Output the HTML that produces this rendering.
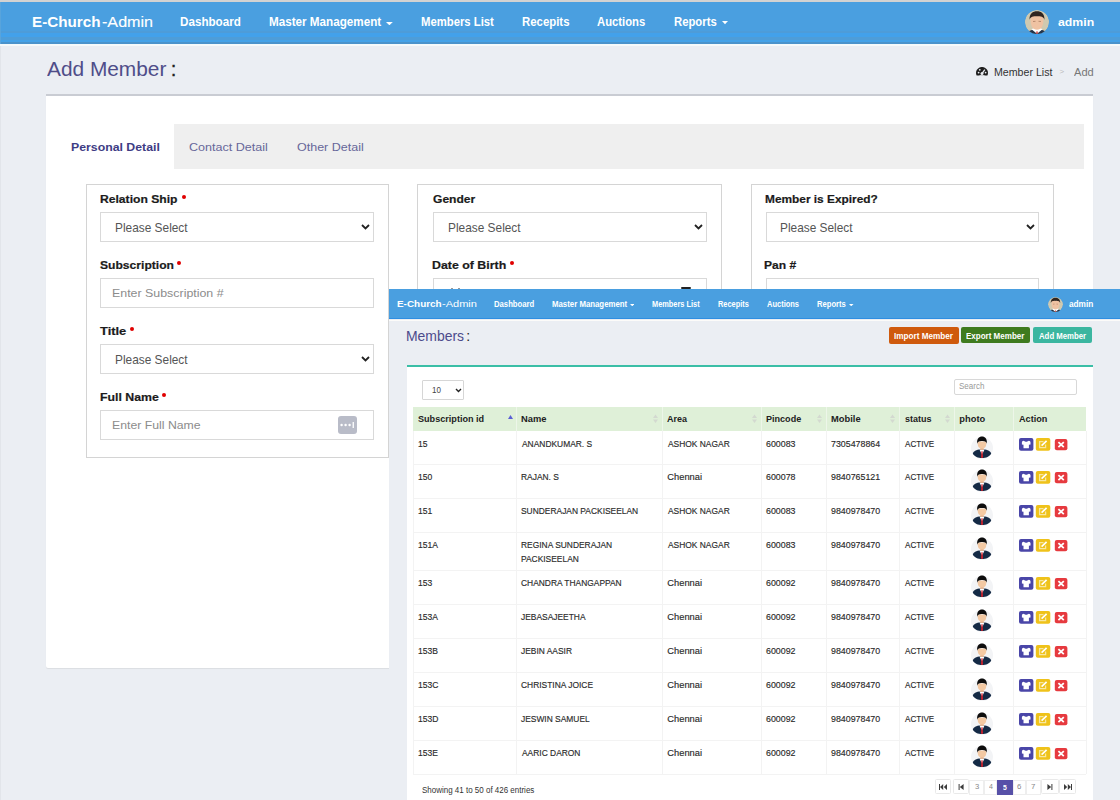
<!DOCTYPE html>
<html><head><meta charset="utf-8"><title>E-Church Admin</title>
<style>
html,body{margin:0;padding:0;}
body{width:1120px;height:800px;overflow:hidden;position:relative;background:#ebeef3;font-family:"Liberation Sans",sans-serif;}
body>div,body>span,body>svg{position:absolute;}
.t{white-space:nowrap;line-height:1;transform-origin:0 0;display:block;}
</style></head><body>
<div style="left:0px;top:0px;width:1120px;height:800px;background:#ebeef3"></div>
<div style="left:0px;top:0px;width:1120px;height:2px;background:#d2d2d2"></div>
<div style="left:0px;top:2px;width:1120px;height:42px;background:#4a9fe0"></div>
<div style="left:0px;top:31px;width:1120px;height:2px;background:#4e9cd8"></div>
<div style="left:0px;top:33px;width:1120px;height:4px;background:#43a1ea"></div>
<div style="left:0px;top:37px;width:1120px;height:3px;background:#4e9dd8"></div>
<div style="left:0px;top:40px;width:1120px;height:2px;background:#44a2e8"></div>
<div style="left:0px;top:42px;width:1120px;height:2px;background:#4a93cb"></div>
<div style="left:0px;top:44px;width:1120px;height:1.5px;background:#f5fafb"></div>
<div style="left:0px;top:2px;width:1px;height:42px;background:#58a4dc"></div>
<div style="left:0px;top:45.5px;width:1px;height:755px;background:#e2e5ea"></div>
<span class="t" style="left:32.33px;top:14.58px;font-size:14.97px;font-weight:bold;color:#fff;transform:scaleX(1.018);">E-Church</span>
<span class="t" style="left:101.55px;top:14.60px;font-size:14.53px;color:#fff;transform:scaleX(1.111);-webkit-text-stroke:0.12px #fff;">-Admin</span>
<span class="t" style="left:180.18px;top:16.71px;font-size:11.92px;font-weight:bold;color:#fff;transform:scaleX(0.979);">Dashboard</span>
<span class="t" style="left:268.78px;top:16.71px;font-size:11.92px;font-weight:bold;color:#fff;transform:scaleX(0.980);">Master Management</span>
<svg style="left:385.9px;top:21.9px" width="6.8" height="3.3" viewBox="0 0 6.80 3.30"><path d="M0 0 L6.80 0 L3.40 3.30Z" fill="#fff"/></svg>
<span class="t" style="left:421.21px;top:16.71px;font-size:11.92px;font-weight:bold;color:#fff;transform:scaleX(0.949);">Members List</span>
<span class="t" style="left:521.90px;top:16.71px;font-size:11.92px;font-weight:bold;color:#fff;transform:scaleX(0.957);">Recepits</span>
<span class="t" style="left:597.06px;top:16.71px;font-size:11.92px;font-weight:bold;color:#fff;transform:scaleX(0.947);">Auctions</span>
<span class="t" style="left:673.51px;top:16.71px;font-size:11.92px;font-weight:bold;color:#fff;transform:scaleX(0.949);">Reports</span>
<svg style="left:721.9px;top:21.4px" width="6.0" height="3.3" viewBox="0 0 6.00 3.30"><path d="M0 0 L6.00 0 L3.00 3.30Z" fill="#fff"/></svg>
<span class="t" style="left:1057.63px;top:16.36px;font-size:11.63px;font-weight:bold;color:#fff;transform:scaleX(1.056);">admin</span>
<svg style="left:1024.5px;top:10px" width="24" height="24" viewBox="0 0 24 24"><defs><clipPath id="ac1"><circle cx="12" cy="12" r="12"/></clipPath></defs><g clip-path="url(#ac1)"><circle cx="12" cy="12" r="12" fill="#cfc9b0"/><path d="M1 26 C2 21 6 19.5 12 19.5 C18 19.5 22 21 23 26Z" fill="#23344a"/><path d="M6.5 19.2 L12 23.8 L17.5 19.2 L15 18 L9 18Z" fill="#fff"/><path d="M11.2 21.5 L12.8 21.5 L12.6 24 L11.4 24Z" fill="#c83434"/><path d="M5.6 5.5 L5.6 10 C5.6 15.5 7.5 19.8 12 19.8 C16.5 19.8 18.4 15.5 18.4 10 L18.4 5.5Z" fill="#efc2a2"/><path d="M8 11.5 L10.5 11.3 M13.5 11.3 L16 11.5" stroke="#b88a6e" stroke-width="1"/><path d="M4.6 10 C4 3.5 8 1.2 12 1.2 C16 1.2 20 3.5 19.4 10 C18.8 7 17 6 12 6.2 C7 6 5.2 7 4.6 10Z" fill="#2f2520"/></g></svg>
<span class="t" style="left:46.70px;top:58.77px;font-size:20.35px;color:#4f4d89;transform:scaleX(1.025);">Add Member</span>
<span class="t" style="left:170.77px;top:58.77px;font-size:20.35px;color:#222;-webkit-text-stroke:0.3px #222;">:</span>
<svg style="left:976px;top:67.4px" width="12" height="9" viewBox="0 0 12 9"><path d="M0.6 8.6 A6 6 0 1 1 11.4 8.6Z" fill="#1e1e1e"/><circle cx="6" cy="6.6" r="1.5" fill="#ebeef3"/><path d="M6 6.6 L8.8 2.6" stroke="#ebeef3" stroke-width="1.3"/><circle cx="2.6" cy="5.6" r="0.9" fill="#ebeef3"/><circle cx="3.8" cy="2.8" r="0.9" fill="#ebeef3"/><circle cx="9.6" cy="5.6" r="0.9" fill="#ebeef3"/><path d="M3.5 8.6 L8.5 8.6" stroke="#ebeef3" stroke-width="0.8"/></svg>
<span class="t" style="left:994.15px;top:66.58px;font-size:10.54px;color:#333;transform:scaleX(1.009);">Member List</span>
<span class="t" style="left:1059.60px;top:67.73px;font-size:7.99px;color:#bbb;">&gt;</span>
<span class="t" style="left:1074.00px;top:66.58px;font-size:10.54px;color:#777;transform:scaleX(1.054);">Add</span>
<div style="left:46.2px;top:95px;width:1047.3px;height:572.5px;background:#fff;box-shadow:0 1px 1px rgba(0,0,0,.07);border-radius:0 0 2px 2px"></div>
<div style="left:46.2px;top:94.1px;width:1047.3px;height:2.2px;background:#c9ccd3"></div>
<div style="left:174px;top:123.8px;width:910px;height:45.7px;background:#efefef"></div>
<span class="t" style="left:70.54px;top:140.93px;font-size:11.77px;font-weight:bold;color:#3e3c84;transform:scaleX(1.045);">Personal Detail</span>
<span class="t" style="left:189.07px;top:140.93px;font-size:11.77px;color:#67679a;transform:scaleX(1.067);">Contact Detail</span>
<span class="t" style="left:296.97px;top:140.93px;font-size:11.77px;color:#67679a;transform:scaleX(1.063);">Other Detail</span>
<div style="left:86px;top:184.1px;width:302.8px;height:274px;box-sizing:border-box;border:1.6px solid #d4d4d4;background:#fff"></div>
<span class="t" style="left:99.65px;top:193.70px;font-size:11.34px;font-weight:bold;color:#1b1b1b;transform:scaleX(1.070);-webkit-text-stroke:0.2px #1b1b1b;">Relation Ship</span>
<div style="left:181.6px;top:195.2px;width:4.1px;height:4.1px;border-radius:50%;background:#e00000"></div>
<div style="left:100.4px;top:212px;width:273.4px;height:30px;box-sizing:border-box;border:1.5px solid #d9d9d9;background:#fff"></div>
<span class="t" style="left:115.25px;top:221.69px;font-size:12.35px;color:#555;transform:scaleX(0.962);">Please Select</span>
<svg style="left:361.0px;top:223.9px" width="9" height="6" viewBox="0 0 9 6"><path d="M1 1 L4.5 4.5 L8 1" fill="none" stroke="#222" stroke-width="1.8"/></svg>
<span class="t" style="left:100.14px;top:259.70px;font-size:11.34px;font-weight:bold;color:#1b1b1b;transform:scaleX(1.068);-webkit-text-stroke:0.2px #1b1b1b;">Subscription</span>
<div style="left:177.1px;top:261.2px;width:4.1px;height:4.1px;border-radius:50%;background:#e00000"></div>
<div style="left:100.4px;top:278px;width:273.4px;height:30px;box-sizing:border-box;border:1.5px solid #d9d9d9;background:#fff"></div>
<span class="t" style="left:111.71px;top:287.46px;font-size:11.63px;color:#8c8c8c;transform:scaleX(1.066);">Enter Subscription #</span>
<span class="t" style="left:100.37px;top:325.70px;font-size:11.34px;font-weight:bold;color:#1b1b1b;transform:scaleX(1.139);-webkit-text-stroke:0.2px #1b1b1b;">Title</span>
<div style="left:130.1px;top:327.2px;width:4.1px;height:4.1px;border-radius:50%;background:#e00000"></div>
<div style="left:100.4px;top:344px;width:273.4px;height:30px;box-sizing:border-box;border:1.5px solid #d9d9d9;background:#fff"></div>
<span class="t" style="left:115.25px;top:353.69px;font-size:12.35px;color:#555;transform:scaleX(0.962);">Please Select</span>
<svg style="left:361.0px;top:355.9px" width="9" height="6" viewBox="0 0 9 6"><path d="M1 1 L4.5 4.5 L8 1" fill="none" stroke="#222" stroke-width="1.8"/></svg>
<span class="t" style="left:99.64px;top:391.70px;font-size:11.34px;font-weight:bold;color:#1b1b1b;transform:scaleX(1.086);-webkit-text-stroke:0.2px #1b1b1b;">Full Name</span>
<div style="left:162.1px;top:393.2px;width:4.1px;height:4.1px;border-radius:50%;background:#e00000"></div>
<div style="left:100.4px;top:410px;width:273.4px;height:30px;box-sizing:border-box;border:1.5px solid #d9d9d9;background:#fff"></div>
<span class="t" style="left:111.72px;top:419.46px;font-size:11.63px;color:#8c8c8c;transform:scaleX(1.055);">Enter Full Name</span>
<svg style="left:338px;top:416px" width="19" height="18" viewBox="0 0 19 18"><rect x="0" y="0" width="19" height="18" rx="3" fill="#b9bcc8"/><circle cx="3.6" cy="9" r="1.2" fill="#fff"/><circle cx="7.6" cy="9" r="1.2" fill="#fff"/><circle cx="11.6" cy="9" r="1.2" fill="#fff"/><rect x="14.6" y="6" width="1.3" height="6" fill="#fff"/></svg>
<div style="left:417.2px;top:184.1px;width:304.5px;height:400px;box-sizing:border-box;border:1.6px solid #d4d4d4;background:#fff"></div>
<span class="t" style="left:432.52px;top:193.70px;font-size:11.34px;font-weight:bold;color:#1b1b1b;transform:scaleX(1.064);-webkit-text-stroke:0.2px #1b1b1b;">Gender</span>
<div style="left:432.7px;top:212px;width:274px;height:30px;box-sizing:border-box;border:1.5px solid #d9d9d9;background:#fff"></div>
<span class="t" style="left:447.95px;top:221.69px;font-size:12.35px;color:#555;transform:scaleX(0.962);">Please Select</span>
<svg style="left:693.9px;top:223.9px" width="9" height="6" viewBox="0 0 9 6"><path d="M1 1 L4.5 4.5 L8 1" fill="none" stroke="#222" stroke-width="1.8"/></svg>
<span class="t" style="left:432.03px;top:259.70px;font-size:11.34px;font-weight:bold;color:#1b1b1b;transform:scaleX(1.092);-webkit-text-stroke:0.2px #1b1b1b;">Date of Birth</span>
<div style="left:509.6px;top:261.2px;width:4.1px;height:4.1px;border-radius:50%;background:#e00000"></div>
<div style="left:432.7px;top:278px;width:274px;height:30px;box-sizing:border-box;border:1.5px solid #d9d9d9;background:#fff"></div>
<div style="left:681px;top:287px;width:10px;height:2px;background:#222;border-radius:1px"></div>
<div style="left:450.5px;top:287.5px;width:2.2px;height:1.5px;background:#999"></div>
<div style="left:457.8px;top:287.5px;width:2.2px;height:1.5px;background:#999"></div>
<div style="left:750.8px;top:184.1px;width:303px;height:400px;box-sizing:border-box;border:1.6px solid #d4d4d4;background:#fff"></div>
<span class="t" style="left:765.27px;top:193.70px;font-size:11.34px;font-weight:bold;color:#1b1b1b;transform:scaleX(1.048);-webkit-text-stroke:0.2px #1b1b1b;">Member is Expired?</span>
<div style="left:765.7px;top:212px;width:273px;height:30px;box-sizing:border-box;border:1.5px solid #d9d9d9;background:#fff"></div>
<span class="t" style="left:780.45px;top:221.69px;font-size:12.35px;color:#555;transform:scaleX(0.961);">Please Select</span>
<svg style="left:1025.9px;top:223.9px" width="9" height="6" viewBox="0 0 9 6"><path d="M1 1 L4.5 4.5 L8 1" fill="none" stroke="#222" stroke-width="1.8"/></svg>
<span class="t" style="left:764.46px;top:259.70px;font-size:11.34px;font-weight:bold;color:#1b1b1b;transform:scaleX(1.063);-webkit-text-stroke:0.2px #1b1b1b;">Pan #</span>
<div style="left:765.7px;top:278px;width:273px;height:30px;box-sizing:border-box;border:1.5px solid #d9d9d9;background:#fff"></div>
<div style="left:389px;top:289px;width:731px;height:511px;background:#ebeef3"></div>
<div style="left:389px;top:289px;width:731px;height:30px;background:#4a9fe0"></div>
<div style="left:389px;top:317.6px;width:731px;height:1.2px;background:#2f8ee2"></div>
<div style="left:389px;top:319.8px;width:731px;height:1.2px;background:#fcfbf9"></div>
<span class="t" style="left:396.90px;top:299.30px;font-size:9.45px;font-weight:bold;color:#fff;transform:scaleX(1.051);">E-Church</span>
<span class="t" style="left:441.76px;top:299.30px;font-size:9.45px;color:#fff;transform:scaleX(1.169);">-Admin</span>
<span class="t" style="left:494.06px;top:300.59px;font-size:8.28px;font-weight:bold;color:#fff;transform:scaleX(0.932);">Dashboard</span>
<span class="t" style="left:552.25px;top:300.59px;font-size:8.28px;font-weight:bold;color:#fff;transform:scaleX(0.946);">Master Management</span>
<svg style="left:629.5px;top:303.5px" width="4.5" height="2.3" viewBox="0 0 4.50 2.30"><path d="M0 0 L4.50 0 L2.25 2.30Z" fill="#fff"/></svg>
<span class="t" style="left:651.88px;top:300.59px;font-size:8.28px;font-weight:bold;color:#fff;transform:scaleX(0.894);">Members List</span>
<span class="t" style="left:718.18px;top:300.59px;font-size:8.28px;font-weight:bold;color:#fff;transform:scaleX(0.892);">Recepits</span>
<span class="t" style="left:767.17px;top:300.59px;font-size:8.28px;font-weight:bold;color:#fff;transform:scaleX(0.906);">Auctions</span>
<span class="t" style="left:817.47px;top:300.59px;font-size:8.28px;font-weight:bold;color:#fff;transform:scaleX(0.921);">Reports</span>
<svg style="left:849.0px;top:303.5px" width="4.5" height="2.3" viewBox="0 0 4.50 2.30"><path d="M0 0 L4.50 0 L2.25 2.30Z" fill="#fff"/></svg>
<svg style="left:1047.5px;top:296.5px" width="15.0" height="15.0" viewBox="0 0 24 24"><defs><clipPath id="ac2"><circle cx="12" cy="12" r="12"/></clipPath></defs><g clip-path="url(#ac2)"><circle cx="12" cy="12" r="12" fill="#cfc9b0"/><path d="M1 26 C2 21 6 19.5 12 19.5 C18 19.5 22 21 23 26Z" fill="#23344a"/><path d="M6.5 19.2 L12 23.8 L17.5 19.2 L15 18 L9 18Z" fill="#fff"/><path d="M11.2 21.5 L12.8 21.5 L12.6 24 L11.4 24Z" fill="#c83434"/><path d="M5.6 5.5 L5.6 10 C5.6 15.5 7.5 19.8 12 19.8 C16.5 19.8 18.4 15.5 18.4 10 L18.4 5.5Z" fill="#efc2a2"/><path d="M8 11.5 L10.5 11.3 M13.5 11.3 L16 11.5" stroke="#b88a6e" stroke-width="1"/><path d="M4.6 10 C4 3.5 8 1.2 12 1.2 C16 1.2 20 3.5 19.4 10 C18.8 7 17 6 12 6.2 C7 6 5.2 7 4.6 10Z" fill="#2f2520"/></g></svg>
<span class="t" style="left:1068.75px;top:299.38px;font-size:9.59px;font-weight:bold;color:#fff;transform:scaleX(0.860);">admin</span>
<span class="t" style="left:405.88px;top:329.07px;font-size:14.10px;color:#4d4b8c;transform:scaleX(0.989);">Members</span>
<span class="t" style="left:466.23px;top:329.07px;font-size:14.10px;color:#222;">:</span>
<div style="left:889.4px;top:327.3px;width:69.4px;height:16.5px;background:#cf5a0d;border-radius:2px"></div>
<span class="t" style="left:893.93px;top:331.67px;font-size:9.01px;font-weight:bold;color:#fff;transform:scaleX(0.908);">Import Member</span>
<div style="left:960.6px;top:327px;width:69px;height:16.3px;background:#3f7b1f;border-radius:2px"></div>
<span class="t" style="left:965.74px;top:331.67px;font-size:9.01px;font-weight:bold;color:#fff;transform:scaleX(0.891);">Export Member</span>
<div style="left:1033px;top:327px;width:59.2px;height:16.3px;background:#3bb6a0;border-radius:2px"></div>
<span class="t" style="left:1039.07px;top:331.67px;font-size:9.01px;font-weight:bold;color:#fff;transform:scaleX(0.865);">Add Member</span>
<div style="left:407px;top:365px;width:686px;height:435px;background:#fff"></div>
<div style="left:407px;top:365px;width:686px;height:2.2px;background:#3bbea6"></div>
<div style="left:422px;top:380px;width:42px;height:20px;box-sizing:border-box;border:1px solid #d6d6d6;background:#fff;border-radius:1px"></div>
<span class="t" style="left:432.36px;top:385.67px;font-size:9.01px;color:#444;transform:scaleX(0.888);">10</span>
<svg style="left:455px;top:387.5px" width="7" height="5" viewBox="0 0 7 5"><path d="M1 1 L3.5 3.5 L6 1" fill="none" stroke="#222" stroke-width="1.4"/></svg>
<div style="left:953.6px;top:379.3px;width:123.8px;height:15.3px;box-sizing:border-box;border:1px solid #d8d8d8;background:#fff;border-radius:2px"></div>
<span class="t" style="left:959.10px;top:382.99px;font-size:8.28px;color:#999;transform:scaleX(0.970);">Search</span>
<div style="left:413.4px;top:407px;width:672.6px;height:24px;background:#dff0d8"></div>
<div style="left:412.9px;top:431px;width:1px;height:343px;background:#f3f3f3"></div>
<div style="left:515.8px;top:431px;width:1px;height:343px;background:#f3f3f3"></div>
<div style="left:661.8px;top:431px;width:1px;height:343px;background:#f3f3f3"></div>
<div style="left:760.9px;top:431px;width:1px;height:343px;background:#f3f3f3"></div>
<div style="left:826.1px;top:431px;width:1px;height:343px;background:#f3f3f3"></div>
<div style="left:899.0px;top:431px;width:1px;height:343px;background:#f3f3f3"></div>
<div style="left:954.0px;top:431px;width:1px;height:343px;background:#f3f3f3"></div>
<div style="left:1013.3px;top:431px;width:1px;height:343px;background:#f3f3f3"></div>
<div style="left:1085.5px;top:431px;width:1px;height:343px;background:#f3f3f3"></div>
<div style="left:413.4px;top:463.8px;width:672.6px;height:1px;background:#f3f3f3"></div>
<div style="left:413.4px;top:497.6px;width:672.6px;height:1px;background:#f3f3f3"></div>
<div style="left:413.4px;top:531.7px;width:672.6px;height:1px;background:#f3f3f3"></div>
<div style="left:413.4px;top:569.5px;width:672.6px;height:1px;background:#f3f3f3"></div>
<div style="left:413.4px;top:603.7px;width:672.6px;height:1px;background:#f3f3f3"></div>
<div style="left:413.4px;top:637.8px;width:672.6px;height:1px;background:#f3f3f3"></div>
<div style="left:413.4px;top:672.1px;width:672.6px;height:1px;background:#f3f3f3"></div>
<div style="left:413.4px;top:706.0px;width:672.6px;height:1px;background:#f3f3f3"></div>
<div style="left:413.4px;top:739.8px;width:672.6px;height:1px;background:#f3f3f3"></div>
<div style="left:413.4px;top:773.5px;width:672.6px;height:1px;background:#f3f3f3"></div>
<div style="left:515.8px;top:407px;width:1px;height:24px;background:#edf6e9"></div>
<div style="left:661.8px;top:407px;width:1px;height:24px;background:#edf6e9"></div>
<div style="left:760.9px;top:407px;width:1px;height:24px;background:#edf6e9"></div>
<div style="left:826.1px;top:407px;width:1px;height:24px;background:#edf6e9"></div>
<div style="left:899.0px;top:407px;width:1px;height:24px;background:#edf6e9"></div>
<div style="left:954.0px;top:407px;width:1px;height:24px;background:#edf6e9"></div>
<div style="left:1013.3px;top:407px;width:1px;height:24px;background:#edf6e9"></div>
<span class="t" style="left:418.33px;top:414.53px;font-size:9.30px;font-weight:bold;color:#222;transform:scaleX(0.978);">Subscription id</span>
<span class="t" style="left:521.25px;top:414.53px;font-size:9.30px;font-weight:bold;color:#222;transform:scaleX(1.005);">Name</span>
<span class="t" style="left:667.43px;top:414.53px;font-size:9.30px;font-weight:bold;color:#222;transform:scaleX(0.970);">Area</span>
<span class="t" style="left:766.27px;top:414.53px;font-size:9.30px;font-weight:bold;color:#222;transform:scaleX(0.973);">Pincode</span>
<span class="t" style="left:831.45px;top:414.53px;font-size:9.30px;font-weight:bold;color:#222;transform:scaleX(1.005);">Mobile</span>
<span class="t" style="left:904.64px;top:414.53px;font-size:9.30px;font-weight:bold;color:#222;transform:scaleX(0.970);">status</span>
<span class="t" style="left:959.35px;top:414.53px;font-size:9.30px;font-weight:bold;color:#222;">photo</span>
<span class="t" style="left:1018.73px;top:414.53px;font-size:9.30px;font-weight:bold;color:#222;transform:scaleX(0.979);">Action</span>
<svg style="left:507.5px;top:415px" width="5" height="4" viewBox="0 0 5 4"><path d="M0 4 L2.5 0 L5 4Z" fill="#5b5fd6"/></svg>
<svg style="left:653.2px;top:413.5px" width="5" height="10" viewBox="0 0 5 10"><path d="M0 4 L2.5 0.5 L5 4Z M0 5.5 L2.5 9 L5 5.5Z" fill="#d3d9d0"/></svg>
<svg style="left:751.5px;top:413.5px" width="5" height="10" viewBox="0 0 5 10"><path d="M0 4 L2.5 0.5 L5 4Z M0 5.5 L2.5 9 L5 5.5Z" fill="#d3d9d0"/></svg>
<svg style="left:817.0px;top:413.5px" width="5" height="10" viewBox="0 0 5 10"><path d="M0 4 L2.5 0.5 L5 4Z M0 5.5 L2.5 9 L5 5.5Z" fill="#d3d9d0"/></svg>
<svg style="left:890.0px;top:413.5px" width="5" height="10" viewBox="0 0 5 10"><path d="M0 4 L2.5 0.5 L5 4Z M0 5.5 L2.5 9 L5 5.5Z" fill="#d3d9d0"/></svg>
<svg style="left:945.0px;top:413.5px" width="5" height="10" viewBox="0 0 5 10"><path d="M0 4 L2.5 0.5 L5 4Z M0 5.5 L2.5 9 L5 5.5Z" fill="#d3d9d0"/></svg>
<span class="t" style="left:418.32px;top:439.68px;font-size:9.30px;color:#2a2a2a;transform:scaleX(0.920);-webkit-text-stroke:0.15px #2a2a2a;">15</span>
<span class="t" style="left:521.50px;top:439.68px;font-size:9.30px;color:#2a2a2a;transform:scaleX(0.905);-webkit-text-stroke:0.15px #2a2a2a;">ANANDKUMAR. S</span>
<span class="t" style="left:667.80px;top:439.68px;font-size:9.30px;color:#2a2a2a;transform:scaleX(0.905);-webkit-text-stroke:0.15px #2a2a2a;">ASHOK NAGAR</span>
<span class="t" style="left:765.96px;top:439.68px;font-size:9.30px;color:#2a2a2a;transform:scaleX(0.950);-webkit-text-stroke:0.15px #2a2a2a;">600083</span>
<span class="t" style="left:831.16px;top:439.68px;font-size:9.30px;color:#2a2a2a;transform:scaleX(0.950);-webkit-text-stroke:0.15px #2a2a2a;">7305478864</span>
<span class="t" style="left:904.60px;top:439.68px;font-size:9.30px;color:#2a2a2a;transform:scaleX(0.870);-webkit-text-stroke:0.15px #2a2a2a;">ACTIVE</span>
<svg style="left:971px;top:434.0px" width="22" height="28" viewBox="0 0 22 28"><circle cx="11" cy="14" r="11" fill="#f3f4f6"/><path d="M1.8 19.5 C3 16.3 7 15.3 11 15.3 C15 15.3 19 16.3 20.2 19.5 C18.5 22.8 15 24 11 24 C7 24 3.5 22.8 1.8 19.5Z" fill="#142a45"/><path d="M8.4 15.6 L11 20.5 L13.6 15.6Z" fill="#fff"/><path d="M10.4 17.3 L11.6 17.3 L12 23.8 L10 23.8Z" fill="#d21f2a"/><rect x="9.3" y="12.5" width="3.4" height="3.4" fill="#e9b58e"/><path d="M6.7 7.5 L15.3 7.5 L15.3 10 C15.3 13 13.5 14.6 11 14.6 C8.5 14.6 6.7 13 6.7 10Z" fill="#f3c9a3"/><path d="M6.2 9.8 C5.6 4.6 8 2.6 11 2.6 C14 2.6 16.4 4.6 15.8 9.8 C15.4 7.6 14.2 6.8 11 6.9 C7.8 6.8 6.6 7.6 6.2 9.8Z" fill="#0d0d0d"/></svg>
<svg style="left:1019.4px;top:437.5px" width="50" height="13" viewBox="0 0 50 13"><rect x="0" y="0" width="14.4" height="12.8" rx="2" fill="#4a46a8"/><path d="M2.9 4.3 Q2.9 2.8 4.5 2.8 L6.1 3.5 Q7.2 4.1 8.3 3.5 L9.9 2.8 Q11.5 2.8 11.5 4.3 L11.5 6.4 L9.9 6.7 L9.9 10.3 L4.5 10.3 L4.5 6.7 L2.9 6.4Z" fill="#fff"/><rect x="16.8" y="0" width="14.5" height="12.8" rx="2" fill="#efc21a"/><path d="M24.5 3.6 L20.6 3.6 L20.6 9.6 L26.6 9.6 L26.6 6.6" fill="none" stroke="#f8e7a0" stroke-width="1.3"/><path d="M22.6 7.6 L27.6 2.8" stroke="#fff" stroke-width="1.7"/><rect x="35.8" y="1.1" width="12.6" height="11.2" rx="2" fill="#e63a3f"/><path d="M39.4 4.2 L44.8 9.2 M44.8 4.2 L39.4 9.2" stroke="#fff" stroke-width="1.8"/></svg>
<span class="t" style="left:418.32px;top:472.73px;font-size:9.30px;color:#2a2a2a;transform:scaleX(0.920);-webkit-text-stroke:0.15px #2a2a2a;">150</span>
<span class="t" style="left:520.83px;top:472.73px;font-size:9.30px;color:#2a2a2a;transform:scaleX(0.905);-webkit-text-stroke:0.15px #2a2a2a;">RAJAN. S</span>
<span class="t" style="left:667.33px;top:472.73px;font-size:9.30px;color:#2a2a2a;-webkit-text-stroke:0.15px #2a2a2a;">Chennai</span>
<span class="t" style="left:765.96px;top:472.73px;font-size:9.30px;color:#2a2a2a;transform:scaleX(0.950);-webkit-text-stroke:0.15px #2a2a2a;">600078</span>
<span class="t" style="left:831.16px;top:472.73px;font-size:9.30px;color:#2a2a2a;transform:scaleX(0.950);-webkit-text-stroke:0.15px #2a2a2a;">9840765121</span>
<span class="t" style="left:904.60px;top:472.73px;font-size:9.30px;color:#2a2a2a;transform:scaleX(0.870);-webkit-text-stroke:0.15px #2a2a2a;">ACTIVE</span>
<svg style="left:971px;top:467.3px" width="22" height="28" viewBox="0 0 22 28"><circle cx="11" cy="14" r="11" fill="#f3f4f6"/><path d="M1.8 19.5 C3 16.3 7 15.3 11 15.3 C15 15.3 19 16.3 20.2 19.5 C18.5 22.8 15 24 11 24 C7 24 3.5 22.8 1.8 19.5Z" fill="#142a45"/><path d="M8.4 15.6 L11 20.5 L13.6 15.6Z" fill="#fff"/><path d="M10.4 17.3 L11.6 17.3 L12 23.8 L10 23.8Z" fill="#d21f2a"/><rect x="9.3" y="12.5" width="3.4" height="3.4" fill="#e9b58e"/><path d="M6.7 7.5 L15.3 7.5 L15.3 10 C15.3 13 13.5 14.6 11 14.6 C8.5 14.6 6.7 13 6.7 10Z" fill="#f3c9a3"/><path d="M6.2 9.8 C5.6 4.6 8 2.6 11 2.6 C14 2.6 16.4 4.6 15.8 9.8 C15.4 7.6 14.2 6.8 11 6.9 C7.8 6.8 6.6 7.6 6.2 9.8Z" fill="#0d0d0d"/></svg>
<svg style="left:1019.4px;top:470.8px" width="50" height="13" viewBox="0 0 50 13"><rect x="0" y="0" width="14.4" height="12.8" rx="2" fill="#4a46a8"/><path d="M2.9 4.3 Q2.9 2.8 4.5 2.8 L6.1 3.5 Q7.2 4.1 8.3 3.5 L9.9 2.8 Q11.5 2.8 11.5 4.3 L11.5 6.4 L9.9 6.7 L9.9 10.3 L4.5 10.3 L4.5 6.7 L2.9 6.4Z" fill="#fff"/><rect x="16.8" y="0" width="14.5" height="12.8" rx="2" fill="#efc21a"/><path d="M24.5 3.6 L20.6 3.6 L20.6 9.6 L26.6 9.6 L26.6 6.6" fill="none" stroke="#f8e7a0" stroke-width="1.3"/><path d="M22.6 7.6 L27.6 2.8" stroke="#fff" stroke-width="1.7"/><rect x="35.8" y="1.1" width="12.6" height="11.2" rx="2" fill="#e63a3f"/><path d="M39.4 4.2 L44.8 9.2 M44.8 4.2 L39.4 9.2" stroke="#fff" stroke-width="1.8"/></svg>
<span class="t" style="left:418.32px;top:506.53px;font-size:9.30px;color:#2a2a2a;transform:scaleX(0.920);-webkit-text-stroke:0.15px #2a2a2a;">151</span>
<span class="t" style="left:521.08px;top:506.53px;font-size:9.30px;color:#2a2a2a;transform:scaleX(0.905);-webkit-text-stroke:0.15px #2a2a2a;">SUNDERAJAN PACKISEELAN</span>
<span class="t" style="left:667.80px;top:506.53px;font-size:9.30px;color:#2a2a2a;transform:scaleX(0.905);-webkit-text-stroke:0.15px #2a2a2a;">ASHOK NAGAR</span>
<span class="t" style="left:765.96px;top:506.53px;font-size:9.30px;color:#2a2a2a;transform:scaleX(0.950);-webkit-text-stroke:0.15px #2a2a2a;">600083</span>
<span class="t" style="left:831.16px;top:506.53px;font-size:9.30px;color:#2a2a2a;transform:scaleX(0.950);-webkit-text-stroke:0.15px #2a2a2a;">9840978470</span>
<span class="t" style="left:904.60px;top:506.53px;font-size:9.30px;color:#2a2a2a;transform:scaleX(0.870);-webkit-text-stroke:0.15px #2a2a2a;">ACTIVE</span>
<svg style="left:971px;top:501.1px" width="22" height="28" viewBox="0 0 22 28"><circle cx="11" cy="14" r="11" fill="#f3f4f6"/><path d="M1.8 19.5 C3 16.3 7 15.3 11 15.3 C15 15.3 19 16.3 20.2 19.5 C18.5 22.8 15 24 11 24 C7 24 3.5 22.8 1.8 19.5Z" fill="#142a45"/><path d="M8.4 15.6 L11 20.5 L13.6 15.6Z" fill="#fff"/><path d="M10.4 17.3 L11.6 17.3 L12 23.8 L10 23.8Z" fill="#d21f2a"/><rect x="9.3" y="12.5" width="3.4" height="3.4" fill="#e9b58e"/><path d="M6.7 7.5 L15.3 7.5 L15.3 10 C15.3 13 13.5 14.6 11 14.6 C8.5 14.6 6.7 13 6.7 10Z" fill="#f3c9a3"/><path d="M6.2 9.8 C5.6 4.6 8 2.6 11 2.6 C14 2.6 16.4 4.6 15.8 9.8 C15.4 7.6 14.2 6.8 11 6.9 C7.8 6.8 6.6 7.6 6.2 9.8Z" fill="#0d0d0d"/></svg>
<svg style="left:1019.4px;top:504.6px" width="50" height="13" viewBox="0 0 50 13"><rect x="0" y="0" width="14.4" height="12.8" rx="2" fill="#4a46a8"/><path d="M2.9 4.3 Q2.9 2.8 4.5 2.8 L6.1 3.5 Q7.2 4.1 8.3 3.5 L9.9 2.8 Q11.5 2.8 11.5 4.3 L11.5 6.4 L9.9 6.7 L9.9 10.3 L4.5 10.3 L4.5 6.7 L2.9 6.4Z" fill="#fff"/><rect x="16.8" y="0" width="14.5" height="12.8" rx="2" fill="#efc21a"/><path d="M24.5 3.6 L20.6 3.6 L20.6 9.6 L26.6 9.6 L26.6 6.6" fill="none" stroke="#f8e7a0" stroke-width="1.3"/><path d="M22.6 7.6 L27.6 2.8" stroke="#fff" stroke-width="1.7"/><rect x="35.8" y="1.1" width="12.6" height="11.2" rx="2" fill="#e63a3f"/><path d="M39.4 4.2 L44.8 9.2 M44.8 4.2 L39.4 9.2" stroke="#fff" stroke-width="1.8"/></svg>
<span class="t" style="left:418.32px;top:540.63px;font-size:9.30px;color:#2a2a2a;transform:scaleX(0.920);-webkit-text-stroke:0.15px #2a2a2a;">151A</span>
<span class="t" style="left:520.83px;top:540.63px;font-size:9.30px;color:#2a2a2a;transform:scaleX(0.905);-webkit-text-stroke:0.15px #2a2a2a;">REGINA SUNDERAJAN</span>
<span class="t" style="left:520.83px;top:554.63px;font-size:9.30px;color:#2a2a2a;transform:scaleX(0.905);-webkit-text-stroke:0.15px #2a2a2a;">PACKISEELAN</span>
<span class="t" style="left:667.80px;top:540.63px;font-size:9.30px;color:#2a2a2a;transform:scaleX(0.905);-webkit-text-stroke:0.15px #2a2a2a;">ASHOK NAGAR</span>
<span class="t" style="left:765.96px;top:540.63px;font-size:9.30px;color:#2a2a2a;transform:scaleX(0.950);-webkit-text-stroke:0.15px #2a2a2a;">600083</span>
<span class="t" style="left:831.16px;top:540.63px;font-size:9.30px;color:#2a2a2a;transform:scaleX(0.950);-webkit-text-stroke:0.15px #2a2a2a;">9840978470</span>
<span class="t" style="left:904.60px;top:540.63px;font-size:9.30px;color:#2a2a2a;transform:scaleX(0.870);-webkit-text-stroke:0.15px #2a2a2a;">ACTIVE</span>
<svg style="left:971px;top:535.2px" width="22" height="28" viewBox="0 0 22 28"><circle cx="11" cy="14" r="11" fill="#f3f4f6"/><path d="M1.8 19.5 C3 16.3 7 15.3 11 15.3 C15 15.3 19 16.3 20.2 19.5 C18.5 22.8 15 24 11 24 C7 24 3.5 22.8 1.8 19.5Z" fill="#142a45"/><path d="M8.4 15.6 L11 20.5 L13.6 15.6Z" fill="#fff"/><path d="M10.4 17.3 L11.6 17.3 L12 23.8 L10 23.8Z" fill="#d21f2a"/><rect x="9.3" y="12.5" width="3.4" height="3.4" fill="#e9b58e"/><path d="M6.7 7.5 L15.3 7.5 L15.3 10 C15.3 13 13.5 14.6 11 14.6 C8.5 14.6 6.7 13 6.7 10Z" fill="#f3c9a3"/><path d="M6.2 9.8 C5.6 4.6 8 2.6 11 2.6 C14 2.6 16.4 4.6 15.8 9.8 C15.4 7.6 14.2 6.8 11 6.9 C7.8 6.8 6.6 7.6 6.2 9.8Z" fill="#0d0d0d"/></svg>
<svg style="left:1019.4px;top:538.7px" width="50" height="13" viewBox="0 0 50 13"><rect x="0" y="0" width="14.4" height="12.8" rx="2" fill="#4a46a8"/><path d="M2.9 4.3 Q2.9 2.8 4.5 2.8 L6.1 3.5 Q7.2 4.1 8.3 3.5 L9.9 2.8 Q11.5 2.8 11.5 4.3 L11.5 6.4 L9.9 6.7 L9.9 10.3 L4.5 10.3 L4.5 6.7 L2.9 6.4Z" fill="#fff"/><rect x="16.8" y="0" width="14.5" height="12.8" rx="2" fill="#efc21a"/><path d="M24.5 3.6 L20.6 3.6 L20.6 9.6 L26.6 9.6 L26.6 6.6" fill="none" stroke="#f8e7a0" stroke-width="1.3"/><path d="M22.6 7.6 L27.6 2.8" stroke="#fff" stroke-width="1.7"/><rect x="35.8" y="1.1" width="12.6" height="11.2" rx="2" fill="#e63a3f"/><path d="M39.4 4.2 L44.8 9.2 M44.8 4.2 L39.4 9.2" stroke="#fff" stroke-width="1.8"/></svg>
<span class="t" style="left:418.32px;top:578.68px;font-size:9.30px;color:#2a2a2a;transform:scaleX(0.920);-webkit-text-stroke:0.15px #2a2a2a;">153</span>
<span class="t" style="left:521.08px;top:578.68px;font-size:9.30px;color:#2a2a2a;transform:scaleX(0.905);-webkit-text-stroke:0.15px #2a2a2a;">CHANDRA THANGAPPAN</span>
<span class="t" style="left:667.33px;top:578.68px;font-size:9.30px;color:#2a2a2a;-webkit-text-stroke:0.15px #2a2a2a;">Chennai</span>
<span class="t" style="left:765.96px;top:578.68px;font-size:9.30px;color:#2a2a2a;transform:scaleX(0.950);-webkit-text-stroke:0.15px #2a2a2a;">600092</span>
<span class="t" style="left:831.16px;top:578.68px;font-size:9.30px;color:#2a2a2a;transform:scaleX(0.950);-webkit-text-stroke:0.15px #2a2a2a;">9840978470</span>
<span class="t" style="left:904.60px;top:578.68px;font-size:9.30px;color:#2a2a2a;transform:scaleX(0.870);-webkit-text-stroke:0.15px #2a2a2a;">ACTIVE</span>
<svg style="left:971px;top:573.0px" width="22" height="28" viewBox="0 0 22 28"><circle cx="11" cy="14" r="11" fill="#f3f4f6"/><path d="M1.8 19.5 C3 16.3 7 15.3 11 15.3 C15 15.3 19 16.3 20.2 19.5 C18.5 22.8 15 24 11 24 C7 24 3.5 22.8 1.8 19.5Z" fill="#142a45"/><path d="M8.4 15.6 L11 20.5 L13.6 15.6Z" fill="#fff"/><path d="M10.4 17.3 L11.6 17.3 L12 23.8 L10 23.8Z" fill="#d21f2a"/><rect x="9.3" y="12.5" width="3.4" height="3.4" fill="#e9b58e"/><path d="M6.7 7.5 L15.3 7.5 L15.3 10 C15.3 13 13.5 14.6 11 14.6 C8.5 14.6 6.7 13 6.7 10Z" fill="#f3c9a3"/><path d="M6.2 9.8 C5.6 4.6 8 2.6 11 2.6 C14 2.6 16.4 4.6 15.8 9.8 C15.4 7.6 14.2 6.8 11 6.9 C7.8 6.8 6.6 7.6 6.2 9.8Z" fill="#0d0d0d"/></svg>
<svg style="left:1019.4px;top:576.5px" width="50" height="13" viewBox="0 0 50 13"><rect x="0" y="0" width="14.4" height="12.8" rx="2" fill="#4a46a8"/><path d="M2.9 4.3 Q2.9 2.8 4.5 2.8 L6.1 3.5 Q7.2 4.1 8.3 3.5 L9.9 2.8 Q11.5 2.8 11.5 4.3 L11.5 6.4 L9.9 6.7 L9.9 10.3 L4.5 10.3 L4.5 6.7 L2.9 6.4Z" fill="#fff"/><rect x="16.8" y="0" width="14.5" height="12.8" rx="2" fill="#efc21a"/><path d="M24.5 3.6 L20.6 3.6 L20.6 9.6 L26.6 9.6 L26.6 6.6" fill="none" stroke="#f8e7a0" stroke-width="1.3"/><path d="M22.6 7.6 L27.6 2.8" stroke="#fff" stroke-width="1.7"/><rect x="35.8" y="1.1" width="12.6" height="11.2" rx="2" fill="#e63a3f"/><path d="M39.4 4.2 L44.8 9.2 M44.8 4.2 L39.4 9.2" stroke="#fff" stroke-width="1.8"/></svg>
<span class="t" style="left:418.32px;top:612.63px;font-size:9.30px;color:#2a2a2a;transform:scaleX(0.920);-webkit-text-stroke:0.15px #2a2a2a;">153A</span>
<span class="t" style="left:521.33px;top:612.63px;font-size:9.30px;color:#2a2a2a;transform:scaleX(0.905);-webkit-text-stroke:0.15px #2a2a2a;">JEBASAJEETHA</span>
<span class="t" style="left:667.33px;top:612.63px;font-size:9.30px;color:#2a2a2a;-webkit-text-stroke:0.15px #2a2a2a;">Chennai</span>
<span class="t" style="left:765.96px;top:612.63px;font-size:9.30px;color:#2a2a2a;transform:scaleX(0.950);-webkit-text-stroke:0.15px #2a2a2a;">600092</span>
<span class="t" style="left:831.16px;top:612.63px;font-size:9.30px;color:#2a2a2a;transform:scaleX(0.950);-webkit-text-stroke:0.15px #2a2a2a;">9840978470</span>
<span class="t" style="left:904.60px;top:612.63px;font-size:9.30px;color:#2a2a2a;transform:scaleX(0.870);-webkit-text-stroke:0.15px #2a2a2a;">ACTIVE</span>
<svg style="left:971px;top:607.2px" width="22" height="28" viewBox="0 0 22 28"><circle cx="11" cy="14" r="11" fill="#f3f4f6"/><path d="M1.8 19.5 C3 16.3 7 15.3 11 15.3 C15 15.3 19 16.3 20.2 19.5 C18.5 22.8 15 24 11 24 C7 24 3.5 22.8 1.8 19.5Z" fill="#142a45"/><path d="M8.4 15.6 L11 20.5 L13.6 15.6Z" fill="#fff"/><path d="M10.4 17.3 L11.6 17.3 L12 23.8 L10 23.8Z" fill="#d21f2a"/><rect x="9.3" y="12.5" width="3.4" height="3.4" fill="#e9b58e"/><path d="M6.7 7.5 L15.3 7.5 L15.3 10 C15.3 13 13.5 14.6 11 14.6 C8.5 14.6 6.7 13 6.7 10Z" fill="#f3c9a3"/><path d="M6.2 9.8 C5.6 4.6 8 2.6 11 2.6 C14 2.6 16.4 4.6 15.8 9.8 C15.4 7.6 14.2 6.8 11 6.9 C7.8 6.8 6.6 7.6 6.2 9.8Z" fill="#0d0d0d"/></svg>
<svg style="left:1019.4px;top:610.7px" width="50" height="13" viewBox="0 0 50 13"><rect x="0" y="0" width="14.4" height="12.8" rx="2" fill="#4a46a8"/><path d="M2.9 4.3 Q2.9 2.8 4.5 2.8 L6.1 3.5 Q7.2 4.1 8.3 3.5 L9.9 2.8 Q11.5 2.8 11.5 4.3 L11.5 6.4 L9.9 6.7 L9.9 10.3 L4.5 10.3 L4.5 6.7 L2.9 6.4Z" fill="#fff"/><rect x="16.8" y="0" width="14.5" height="12.8" rx="2" fill="#efc21a"/><path d="M24.5 3.6 L20.6 3.6 L20.6 9.6 L26.6 9.6 L26.6 6.6" fill="none" stroke="#f8e7a0" stroke-width="1.3"/><path d="M22.6 7.6 L27.6 2.8" stroke="#fff" stroke-width="1.7"/><rect x="35.8" y="1.1" width="12.6" height="11.2" rx="2" fill="#e63a3f"/><path d="M39.4 4.2 L44.8 9.2 M44.8 4.2 L39.4 9.2" stroke="#fff" stroke-width="1.8"/></svg>
<span class="t" style="left:418.32px;top:646.73px;font-size:9.30px;color:#2a2a2a;transform:scaleX(0.920);-webkit-text-stroke:0.15px #2a2a2a;">153B</span>
<span class="t" style="left:521.33px;top:646.73px;font-size:9.30px;color:#2a2a2a;transform:scaleX(0.905);-webkit-text-stroke:0.15px #2a2a2a;">JEBIN AASIR</span>
<span class="t" style="left:667.33px;top:646.73px;font-size:9.30px;color:#2a2a2a;-webkit-text-stroke:0.15px #2a2a2a;">Chennai</span>
<span class="t" style="left:765.96px;top:646.73px;font-size:9.30px;color:#2a2a2a;transform:scaleX(0.950);-webkit-text-stroke:0.15px #2a2a2a;">600092</span>
<span class="t" style="left:831.16px;top:646.73px;font-size:9.30px;color:#2a2a2a;transform:scaleX(0.950);-webkit-text-stroke:0.15px #2a2a2a;">9840978470</span>
<span class="t" style="left:904.60px;top:646.73px;font-size:9.30px;color:#2a2a2a;transform:scaleX(0.870);-webkit-text-stroke:0.15px #2a2a2a;">ACTIVE</span>
<svg style="left:971px;top:641.3px" width="22" height="28" viewBox="0 0 22 28"><circle cx="11" cy="14" r="11" fill="#f3f4f6"/><path d="M1.8 19.5 C3 16.3 7 15.3 11 15.3 C15 15.3 19 16.3 20.2 19.5 C18.5 22.8 15 24 11 24 C7 24 3.5 22.8 1.8 19.5Z" fill="#142a45"/><path d="M8.4 15.6 L11 20.5 L13.6 15.6Z" fill="#fff"/><path d="M10.4 17.3 L11.6 17.3 L12 23.8 L10 23.8Z" fill="#d21f2a"/><rect x="9.3" y="12.5" width="3.4" height="3.4" fill="#e9b58e"/><path d="M6.7 7.5 L15.3 7.5 L15.3 10 C15.3 13 13.5 14.6 11 14.6 C8.5 14.6 6.7 13 6.7 10Z" fill="#f3c9a3"/><path d="M6.2 9.8 C5.6 4.6 8 2.6 11 2.6 C14 2.6 16.4 4.6 15.8 9.8 C15.4 7.6 14.2 6.8 11 6.9 C7.8 6.8 6.6 7.6 6.2 9.8Z" fill="#0d0d0d"/></svg>
<svg style="left:1019.4px;top:644.8px" width="50" height="13" viewBox="0 0 50 13"><rect x="0" y="0" width="14.4" height="12.8" rx="2" fill="#4a46a8"/><path d="M2.9 4.3 Q2.9 2.8 4.5 2.8 L6.1 3.5 Q7.2 4.1 8.3 3.5 L9.9 2.8 Q11.5 2.8 11.5 4.3 L11.5 6.4 L9.9 6.7 L9.9 10.3 L4.5 10.3 L4.5 6.7 L2.9 6.4Z" fill="#fff"/><rect x="16.8" y="0" width="14.5" height="12.8" rx="2" fill="#efc21a"/><path d="M24.5 3.6 L20.6 3.6 L20.6 9.6 L26.6 9.6 L26.6 6.6" fill="none" stroke="#f8e7a0" stroke-width="1.3"/><path d="M22.6 7.6 L27.6 2.8" stroke="#fff" stroke-width="1.7"/><rect x="35.8" y="1.1" width="12.6" height="11.2" rx="2" fill="#e63a3f"/><path d="M39.4 4.2 L44.8 9.2 M44.8 4.2 L39.4 9.2" stroke="#fff" stroke-width="1.8"/></svg>
<span class="t" style="left:418.32px;top:680.53px;font-size:9.30px;color:#2a2a2a;transform:scaleX(0.920);-webkit-text-stroke:0.15px #2a2a2a;">153C</span>
<span class="t" style="left:521.08px;top:680.53px;font-size:9.30px;color:#2a2a2a;transform:scaleX(0.905);-webkit-text-stroke:0.15px #2a2a2a;">CHRISTINA JOICE</span>
<span class="t" style="left:667.33px;top:680.53px;font-size:9.30px;color:#2a2a2a;-webkit-text-stroke:0.15px #2a2a2a;">Chennai</span>
<span class="t" style="left:765.96px;top:680.53px;font-size:9.30px;color:#2a2a2a;transform:scaleX(0.950);-webkit-text-stroke:0.15px #2a2a2a;">600092</span>
<span class="t" style="left:831.16px;top:680.53px;font-size:9.30px;color:#2a2a2a;transform:scaleX(0.950);-webkit-text-stroke:0.15px #2a2a2a;">9840978470</span>
<span class="t" style="left:904.60px;top:680.53px;font-size:9.30px;color:#2a2a2a;transform:scaleX(0.870);-webkit-text-stroke:0.15px #2a2a2a;">ACTIVE</span>
<svg style="left:971px;top:675.6px" width="22" height="28" viewBox="0 0 22 28"><circle cx="11" cy="14" r="11" fill="#f3f4f6"/><path d="M1.8 19.5 C3 16.3 7 15.3 11 15.3 C15 15.3 19 16.3 20.2 19.5 C18.5 22.8 15 24 11 24 C7 24 3.5 22.8 1.8 19.5Z" fill="#142a45"/><path d="M8.4 15.6 L11 20.5 L13.6 15.6Z" fill="#fff"/><path d="M10.4 17.3 L11.6 17.3 L12 23.8 L10 23.8Z" fill="#d21f2a"/><rect x="9.3" y="12.5" width="3.4" height="3.4" fill="#e9b58e"/><path d="M6.7 7.5 L15.3 7.5 L15.3 10 C15.3 13 13.5 14.6 11 14.6 C8.5 14.6 6.7 13 6.7 10Z" fill="#f3c9a3"/><path d="M6.2 9.8 C5.6 4.6 8 2.6 11 2.6 C14 2.6 16.4 4.6 15.8 9.8 C15.4 7.6 14.2 6.8 11 6.9 C7.8 6.8 6.6 7.6 6.2 9.8Z" fill="#0d0d0d"/></svg>
<svg style="left:1019.4px;top:679.1px" width="50" height="13" viewBox="0 0 50 13"><rect x="0" y="0" width="14.4" height="12.8" rx="2" fill="#4a46a8"/><path d="M2.9 4.3 Q2.9 2.8 4.5 2.8 L6.1 3.5 Q7.2 4.1 8.3 3.5 L9.9 2.8 Q11.5 2.8 11.5 4.3 L11.5 6.4 L9.9 6.7 L9.9 10.3 L4.5 10.3 L4.5 6.7 L2.9 6.4Z" fill="#fff"/><rect x="16.8" y="0" width="14.5" height="12.8" rx="2" fill="#efc21a"/><path d="M24.5 3.6 L20.6 3.6 L20.6 9.6 L26.6 9.6 L26.6 6.6" fill="none" stroke="#f8e7a0" stroke-width="1.3"/><path d="M22.6 7.6 L27.6 2.8" stroke="#fff" stroke-width="1.7"/><rect x="35.8" y="1.1" width="12.6" height="11.2" rx="2" fill="#e63a3f"/><path d="M39.4 4.2 L44.8 9.2 M44.8 4.2 L39.4 9.2" stroke="#fff" stroke-width="1.8"/></svg>
<span class="t" style="left:418.32px;top:714.68px;font-size:9.30px;color:#2a2a2a;transform:scaleX(0.920);-webkit-text-stroke:0.15px #2a2a2a;">153D</span>
<span class="t" style="left:521.33px;top:714.68px;font-size:9.30px;color:#2a2a2a;transform:scaleX(0.905);-webkit-text-stroke:0.15px #2a2a2a;">JESWIN SAMUEL</span>
<span class="t" style="left:667.33px;top:714.68px;font-size:9.30px;color:#2a2a2a;-webkit-text-stroke:0.15px #2a2a2a;">Chennai</span>
<span class="t" style="left:765.96px;top:714.68px;font-size:9.30px;color:#2a2a2a;transform:scaleX(0.950);-webkit-text-stroke:0.15px #2a2a2a;">600092</span>
<span class="t" style="left:831.16px;top:714.68px;font-size:9.30px;color:#2a2a2a;transform:scaleX(0.950);-webkit-text-stroke:0.15px #2a2a2a;">9840978470</span>
<span class="t" style="left:904.60px;top:714.68px;font-size:9.30px;color:#2a2a2a;transform:scaleX(0.870);-webkit-text-stroke:0.15px #2a2a2a;">ACTIVE</span>
<svg style="left:971px;top:709.5px" width="22" height="28" viewBox="0 0 22 28"><circle cx="11" cy="14" r="11" fill="#f3f4f6"/><path d="M1.8 19.5 C3 16.3 7 15.3 11 15.3 C15 15.3 19 16.3 20.2 19.5 C18.5 22.8 15 24 11 24 C7 24 3.5 22.8 1.8 19.5Z" fill="#142a45"/><path d="M8.4 15.6 L11 20.5 L13.6 15.6Z" fill="#fff"/><path d="M10.4 17.3 L11.6 17.3 L12 23.8 L10 23.8Z" fill="#d21f2a"/><rect x="9.3" y="12.5" width="3.4" height="3.4" fill="#e9b58e"/><path d="M6.7 7.5 L15.3 7.5 L15.3 10 C15.3 13 13.5 14.6 11 14.6 C8.5 14.6 6.7 13 6.7 10Z" fill="#f3c9a3"/><path d="M6.2 9.8 C5.6 4.6 8 2.6 11 2.6 C14 2.6 16.4 4.6 15.8 9.8 C15.4 7.6 14.2 6.8 11 6.9 C7.8 6.8 6.6 7.6 6.2 9.8Z" fill="#0d0d0d"/></svg>
<svg style="left:1019.4px;top:713.0px" width="50" height="13" viewBox="0 0 50 13"><rect x="0" y="0" width="14.4" height="12.8" rx="2" fill="#4a46a8"/><path d="M2.9 4.3 Q2.9 2.8 4.5 2.8 L6.1 3.5 Q7.2 4.1 8.3 3.5 L9.9 2.8 Q11.5 2.8 11.5 4.3 L11.5 6.4 L9.9 6.7 L9.9 10.3 L4.5 10.3 L4.5 6.7 L2.9 6.4Z" fill="#fff"/><rect x="16.8" y="0" width="14.5" height="12.8" rx="2" fill="#efc21a"/><path d="M24.5 3.6 L20.6 3.6 L20.6 9.6 L26.6 9.6 L26.6 6.6" fill="none" stroke="#f8e7a0" stroke-width="1.3"/><path d="M22.6 7.6 L27.6 2.8" stroke="#fff" stroke-width="1.7"/><rect x="35.8" y="1.1" width="12.6" height="11.2" rx="2" fill="#e63a3f"/><path d="M39.4 4.2 L44.8 9.2 M44.8 4.2 L39.4 9.2" stroke="#fff" stroke-width="1.8"/></svg>
<span class="t" style="left:418.32px;top:748.73px;font-size:9.30px;color:#2a2a2a;transform:scaleX(0.920);-webkit-text-stroke:0.15px #2a2a2a;">153E</span>
<span class="t" style="left:521.50px;top:748.73px;font-size:9.30px;color:#2a2a2a;transform:scaleX(0.905);-webkit-text-stroke:0.15px #2a2a2a;">AARIC DARON</span>
<span class="t" style="left:667.33px;top:748.73px;font-size:9.30px;color:#2a2a2a;-webkit-text-stroke:0.15px #2a2a2a;">Chennai</span>
<span class="t" style="left:765.96px;top:748.73px;font-size:9.30px;color:#2a2a2a;transform:scaleX(0.950);-webkit-text-stroke:0.15px #2a2a2a;">600092</span>
<span class="t" style="left:831.16px;top:748.73px;font-size:9.30px;color:#2a2a2a;transform:scaleX(0.950);-webkit-text-stroke:0.15px #2a2a2a;">9840978470</span>
<span class="t" style="left:904.60px;top:748.73px;font-size:9.30px;color:#2a2a2a;transform:scaleX(0.870);-webkit-text-stroke:0.15px #2a2a2a;">ACTIVE</span>
<svg style="left:971px;top:743.3px" width="22" height="28" viewBox="0 0 22 28"><circle cx="11" cy="14" r="11" fill="#f3f4f6"/><path d="M1.8 19.5 C3 16.3 7 15.3 11 15.3 C15 15.3 19 16.3 20.2 19.5 C18.5 22.8 15 24 11 24 C7 24 3.5 22.8 1.8 19.5Z" fill="#142a45"/><path d="M8.4 15.6 L11 20.5 L13.6 15.6Z" fill="#fff"/><path d="M10.4 17.3 L11.6 17.3 L12 23.8 L10 23.8Z" fill="#d21f2a"/><rect x="9.3" y="12.5" width="3.4" height="3.4" fill="#e9b58e"/><path d="M6.7 7.5 L15.3 7.5 L15.3 10 C15.3 13 13.5 14.6 11 14.6 C8.5 14.6 6.7 13 6.7 10Z" fill="#f3c9a3"/><path d="M6.2 9.8 C5.6 4.6 8 2.6 11 2.6 C14 2.6 16.4 4.6 15.8 9.8 C15.4 7.6 14.2 6.8 11 6.9 C7.8 6.8 6.6 7.6 6.2 9.8Z" fill="#0d0d0d"/></svg>
<svg style="left:1019.4px;top:746.8px" width="50" height="13" viewBox="0 0 50 13"><rect x="0" y="0" width="14.4" height="12.8" rx="2" fill="#4a46a8"/><path d="M2.9 4.3 Q2.9 2.8 4.5 2.8 L6.1 3.5 Q7.2 4.1 8.3 3.5 L9.9 2.8 Q11.5 2.8 11.5 4.3 L11.5 6.4 L9.9 6.7 L9.9 10.3 L4.5 10.3 L4.5 6.7 L2.9 6.4Z" fill="#fff"/><rect x="16.8" y="0" width="14.5" height="12.8" rx="2" fill="#efc21a"/><path d="M24.5 3.6 L20.6 3.6 L20.6 9.6 L26.6 9.6 L26.6 6.6" fill="none" stroke="#f8e7a0" stroke-width="1.3"/><path d="M22.6 7.6 L27.6 2.8" stroke="#fff" stroke-width="1.7"/><rect x="35.8" y="1.1" width="12.6" height="11.2" rx="2" fill="#e63a3f"/><path d="M39.4 4.2 L44.8 9.2 M44.8 4.2 L39.4 9.2" stroke="#fff" stroke-width="1.8"/></svg>
<span class="t" style="left:421.90px;top:785.74px;font-size:8.58px;color:#333;transform:scaleX(0.931);">Showing 41 to 50 of 426 entries</span>
<div style="left:934.6px;top:779.4px;width:16.799999999999955px;height:15.0px;box-sizing:border-box;border:1px solid #e9e9e9;background:#fff;border-radius:1.5px"></div>
<svg style="left:938.0px;top:781.5px" width="10" height="10" viewBox="-5 -5 10 10"><path d="M-4 -3 L-3 -3 L-3 3 L-4 3Z M0.2 -3 L-3 0 L0.2 3Z M4 -3 L0.8 0 L4 3Z" fill="#3c3c3c"/></svg>
<div style="left:952.5px;top:779.4px;width:16.799999999999955px;height:15.0px;box-sizing:border-box;border:1px solid #e9e9e9;background:#fff;border-radius:1.5px"></div>
<svg style="left:955.9px;top:781.5px" width="10" height="10" viewBox="-5 -5 10 10"><path d="M-2.4 -3 L-1.4 -3 L-1.4 3 L-2.4 3Z M2.6 -3 L-1.2 0 L2.6 3Z" fill="#3c3c3c"/></svg>
<div style="left:969.3px;top:780.2px;width:15.0px;height:14.799999999999955px;box-sizing:border-box;border:1px solid #eeeeee;background:#fff"></div>
<span class="t" style="left:974.69px;top:784.22px;font-size:6.83px;color:#888;transform:scaleX(1.121);">3</span>
<div style="left:984.3px;top:780.2px;width:12.800000000000068px;height:14.799999999999955px;box-sizing:border-box;border:1px solid #eeeeee;background:#fff"></div>
<span class="t" style="left:988.76px;top:784.22px;font-size:6.83px;color:#888;transform:scaleX(1.033);">4</span>
<div style="left:997.1px;top:780.2px;width:15.600000000000023px;height:14.799999999999955px;background:#5750a8"></div>
<span class="t" style="left:1003.00px;top:783.60px;font-size:7.56px;font-weight:bold;color:#fff;transform:scaleX(0.900);">5</span>
<div style="left:1012.7px;top:780.2px;width:13.700000000000045px;height:14.799999999999955px;box-sizing:border-box;border:1px solid #eeeeee;background:#fff"></div>
<span class="t" style="left:1017.36px;top:784.22px;font-size:6.83px;color:#888;transform:scaleX(1.146);">6</span>
<div style="left:1026.4px;top:780.2px;width:14.299999999999955px;height:14.799999999999955px;box-sizing:border-box;border:1px solid #eeeeee;background:#fff"></div>
<span class="t" style="left:1031.36px;top:784.22px;font-size:6.83px;color:#888;transform:scaleX(1.146);">7</span>
<div style="left:1040.7px;top:779.4px;width:18.59999999999991px;height:15.0px;box-sizing:border-box;border:1px solid #e9e9e9;background:#fff;border-radius:1.5px"></div>
<svg style="left:1045.0px;top:781.5px" width="10" height="10" viewBox="-5 -5 10 10"><path d="M2.4 -3 L1.4 -3 L1.4 3 L2.4 3Z M-2.6 -3 L1.2 0 L-2.6 3Z" fill="#3c3c3c"/></svg>
<div style="left:1059.3px;top:779.4px;width:17.100000000000136px;height:15.0px;box-sizing:border-box;border:1px solid #e9e9e9;background:#fff;border-radius:1.5px"></div>
<svg style="left:1062.8px;top:781.5px" width="10" height="10" viewBox="-5 -5 10 10"><path d="M4 -3 L3 -3 L3 3 L4 3Z M-0.2 -3 L3 0 L-0.2 3Z M-4 -3 L-0.8 0 L-4 3Z" fill="#3c3c3c"/></svg>
</body></html>
